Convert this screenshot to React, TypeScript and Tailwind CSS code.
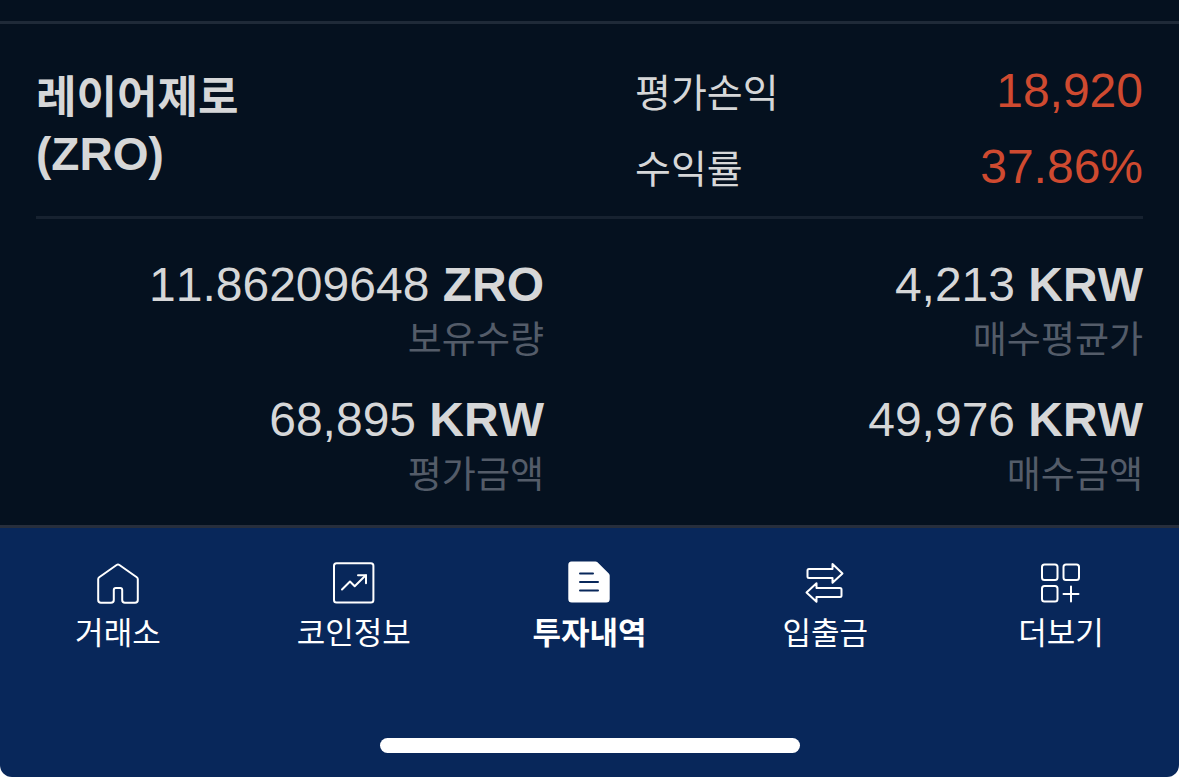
import type { ReactNode } from "react";
import clsx from "clsx";

const holdings = [
  { value: "11.86209648", unit: "ZRO", label: "보유수량" },
  { value: "4,213", unit: "KRW", label: "매수평균가" },
  { value: "68,895", unit: "KRW", label: "평가금액" },
  { value: "49,976", unit: "KRW", label: "매수금액" },
];

const profits = [
  { label: "평가손익", value: "18,920" },
  { label: "수익률", value: "37.86%" },
];

function Icon({ children }: { children: ReactNode }) {
  return (
    <svg
      viewBox="0 0 48 48"
      className="size-12"
      fill="none"
      stroke="currentColor"
      strokeWidth="2"
      strokeLinejoin="round"
      strokeLinecap="round"
      aria-hidden="true"
    >
      {children}
    </svg>
  );
}

function HomeIcon() {
  return (
    <Icon>
      <path d="M22.6 6a2.4 2.4 0 0 1 2.8 0L42.8 18.3a2.4 2.4 0 0 1 1 2V41a2.8 2.8 0 0 1-2.8 2.8H31A2.8 2.8 0 0 1 28.2 41V31a2 2 0 0 0-2-2h-4.4a2 2 0 0 0-2 2v10a2.8 2.8 0 0 1-2.8 2.8H7A2.8 2.8 0 0 1 4.2 41V20.3a2.4 2.4 0 0 1 1-2Z" />
    </Icon>
  );
}

function ChartIcon() {
  return (
    <Icon>
      <rect x="4" y="4.2" width="39.4" height="39.4" rx="2.5" />
      <path d="M12 30.500 20 22.500l4.700 4.700L35.500 16.500" />
      <path d="M28 16.200h8v8" strokeLinejoin="miter" />
    </Icon>
  );
}

function DocumentIcon() {
  return (
    <Icon>
      <path
        d="M6.500 2.500h24a3 3 0 0 1 2 .8L43.800 14.500a3 3 0 0 1 .9 2V40a3.500 3.500 0 0 1-3.500 3.500H6.800A3.500 3.500 0 0 1 3.300 40V6a3.500 3.500 0 0 1 3.200-3.500Z"
        fill="currentColor"
        stroke="none"
      />
      <path d="M15 14.500h13M15 23h18M15 31.500h18" stroke="#08275a" />
    </Icon>
  );
}

function TransferIcon() {
  return (
    <Icon>
      <path d="M8 10h23.500V5l10 9.400-10 9.400V19H8a1.500 1.500 0 0 1-1.500-1.500v-6A1.500 1.500 0 0 1 8 10Z" />
      <path d="M39 29H15.500v-4.800l-10 9.200 10 9.400V38H39a1.500 1.500 0 0 0 1.500-1.500v-6A1.500 1.500 0 0 0 39 29Z" />
    </Icon>
  );
}

function MoreIcon() {
  return (
    <Icon>
      <rect x="5" y="5.500" width="15.500" height="15.500" rx="2.500" />
      <rect x="26.500" y="5.500" width="15.500" height="15.500" rx="2.500" />
      <rect x="5" y="27" width="15.500" height="15.500" rx="2.500" />
      <path d="M26.500 35h15M34 27.500v15" />
    </Icon>
  );
}

const tabs = [
  { label: "거래소", icon: <HomeIcon /> },
  { label: "코인정보", icon: <ChartIcon /> },
  { label: "투자내역", icon: <DocumentIcon />, active: true },
  { label: "입출금", icon: <TransferIcon /> },
  { label: "더보기", icon: <MoreIcon /> },
];

function CoinHeader() {
  return (
    <header className="grid grid-cols-2 gap-x-[91px] border-b-3 border-[#172230] pt-[29px] pb-[11px]">
      <h1 className="flex flex-col pt-4 text-[44px] leading-[57px] font-bold">
        <span>레이어제로</span>
        <span className="text-[46px]">(ZRO)</span>
      </h1>
      <dl>
        {profits.map((profit) => (
          <div
            key={profit.label}
            className="flex h-19 items-baseline justify-between leading-[76px]"
          >
            <dt className="text-[39px]">{profit.label}</dt>
            <dd className="text-[48px] text-[#cf4a30]">{profit.value}</dd>
          </div>
        ))}
      </dl>
    </header>
  );
}

function Holdings() {
  return (
    <dl className="grid grid-cols-2 gap-x-[91px] gap-y-[23px] pt-[38px] pb-[21px] text-right leading-14">
      {holdings.map((item) => (
        <div key={item.label} className="flex flex-col-reverse">
          <dt className="text-[37px] text-[#545c69]">{item.label}</dt>
          <dd className="text-[48px] whitespace-nowrap">
            {item.value} <b>{item.unit}</b>
          </dd>
        </div>
      ))}
    </dl>
  );
}

function TabBar() {
  return (
    <nav className="flex border-t-3 border-[#272e3c] pt-[31px]">
      {tabs.map((tab) => (
        <button
          key={tab.label}
          type="button"
          className={clsx(
            "flex flex-1 flex-col items-center gap-[7px] text-[31px] leading-10",
            tab.active && "font-bold",
          )}
        >
          {tab.icon}
          {tab.label}
        </button>
      ))}
    </nav>
  );
}

export default function App() {
  return (
    <div className="bg-white font-['Liberation_Sans','Noto_Sans_CJK_KR',sans-serif] [font-kerning:none]">
      <main className="bg-[#05111f] pt-[21px] text-[#d6d7d8]">
        <section className="border-t-3 border-[#1f2a38] px-9">
          <CoinHeader />
          <Holdings />
        </section>
      </main>
      <footer className="rounded-b-xl bg-[#08275a] pb-6 text-white">
        <TabBar />
        <div className="mx-auto mt-[84px] h-[15px] w-[420px] rounded-full bg-white" />
      </footer>
    </div>
  );
}
